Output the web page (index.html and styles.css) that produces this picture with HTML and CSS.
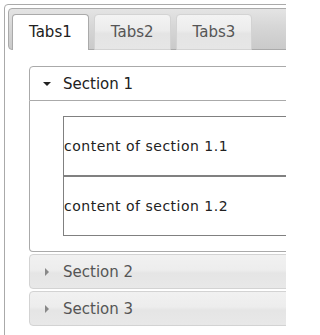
FILE: index.html
```html
<!DOCTYPE html>
<html>
<head>
<meta charset="utf-8">
<link rel="stylesheet" href="styles.css">
</head>
<body>
<div class="frame">
<div class="tabs">
  <ul class="tabnav">
    <li class="tab active">Tabs1</li>
    <li class="tab">Tabs2</li>
    <li class="tab">Tabs3</li>
  </ul>
  <div class="panel">
    <div class="accordion">
      <div class="acc-header open"><span class="icon"><span class="tri-down"></span></span>Section 1</div>
      <div class="acc-content">
        <div class="item">content of section 1.1</div>
        <div class="item">content of section 1.2</div>
      </div>
      <div class="acc-header"><span class="icon"><span class="tri-right"></span></span>Section 2</div>
      <div class="acc-header"><span class="icon"><span class="tri-right"></span></span>Section 3</div>
    </div>
  </div>
</div>
</div>
</body>
</html>
```

FILE: styles.css
```css
html, body {
  overflow: hidden;
}
body {
  margin: 0;
  background: #fff;
  font-family: "DejaVu Sans", Verdana, sans-serif;
}
.frame {
  width: 286px;
  height: 335px;
  padding: 4px 0 0 4px;
  box-sizing: border-box;
  overflow: hidden;
}
.tabs {
  width: 600px;
  height: 360px;
  border: 1px solid #aaa;
  border-radius: 4px;
  padding: 3px;
  font-size: 15px;
  line-height: 18px;
  box-sizing: border-box;
}
.tabnav {
  list-style: none;
  margin: 0;
  padding: 4px 3px 0;
  display: flex;
  gap: 5px;
  border: 1px solid #aaa;
  border-radius: 4px;
  background: linear-gradient(#e4e4e4, #d6d6d6 45%, #cacaca);
}
.tab {
  margin: 1px 0 -1px;
  padding: 8px 16px 7px;
  border: 1px solid #d3d3d3;
  border-radius: 4px 4px 0 0;
  background: linear-gradient(#f3f3f3, #ececec 45%, #e4e4e4 55%, #e6e6e6);
  color: #555;
}
.tab.active {
  border-color: #aaa;
  border-bottom: 0;
  padding-bottom: 9px;
  background: #fff;
  color: #212121;
}
.panel {
  padding: 16px 21px 15px;
}
.accordion {
  display: flex;
  flex-direction: column;
}
.acc-header {
  display: flex;
  align-items: center;
  padding: 8px 8px 7px 0;
  border: 1px solid #d3d3d3;
  border-radius: 4px;
  margin-top: 2px;
  background: linear-gradient(#f1f1f1, #ededed 45%, #e5e5e5 55%, #e8e8e8);
  color: #555;
}
.acc-header.open {
  margin-top: 0;
  border-color: #aaa;
  border-radius: 4px 4px 0 0;
  background: #fff;
  color: #212121;
}
.icon {
  width: 33px;
  display: flex;
  justify-content: center;
  align-items: center;
}
.tri-down {
  width: 0;
  height: 0;
  border-left: 4px solid transparent;
  border-right: 4px solid transparent;
  border-top: 4px solid #222;
}
.tri-right {
  width: 0;
  height: 0;
  border-top: 4px solid transparent;
  border-bottom: 4px solid transparent;
  border-left: 4px solid #888;
}
.acc-content {
  border: 1px solid #aaa;
  border-top: 0;
  border-radius: 0 0 4px 4px;
  padding: 15px 33px;
}
.item {
  height: 58px;
  display: flex;
  align-items: center;
  border: 1px solid #808080;
  font-size: 14px;
  letter-spacing: 0.5px;
  color: #222;
}
```
